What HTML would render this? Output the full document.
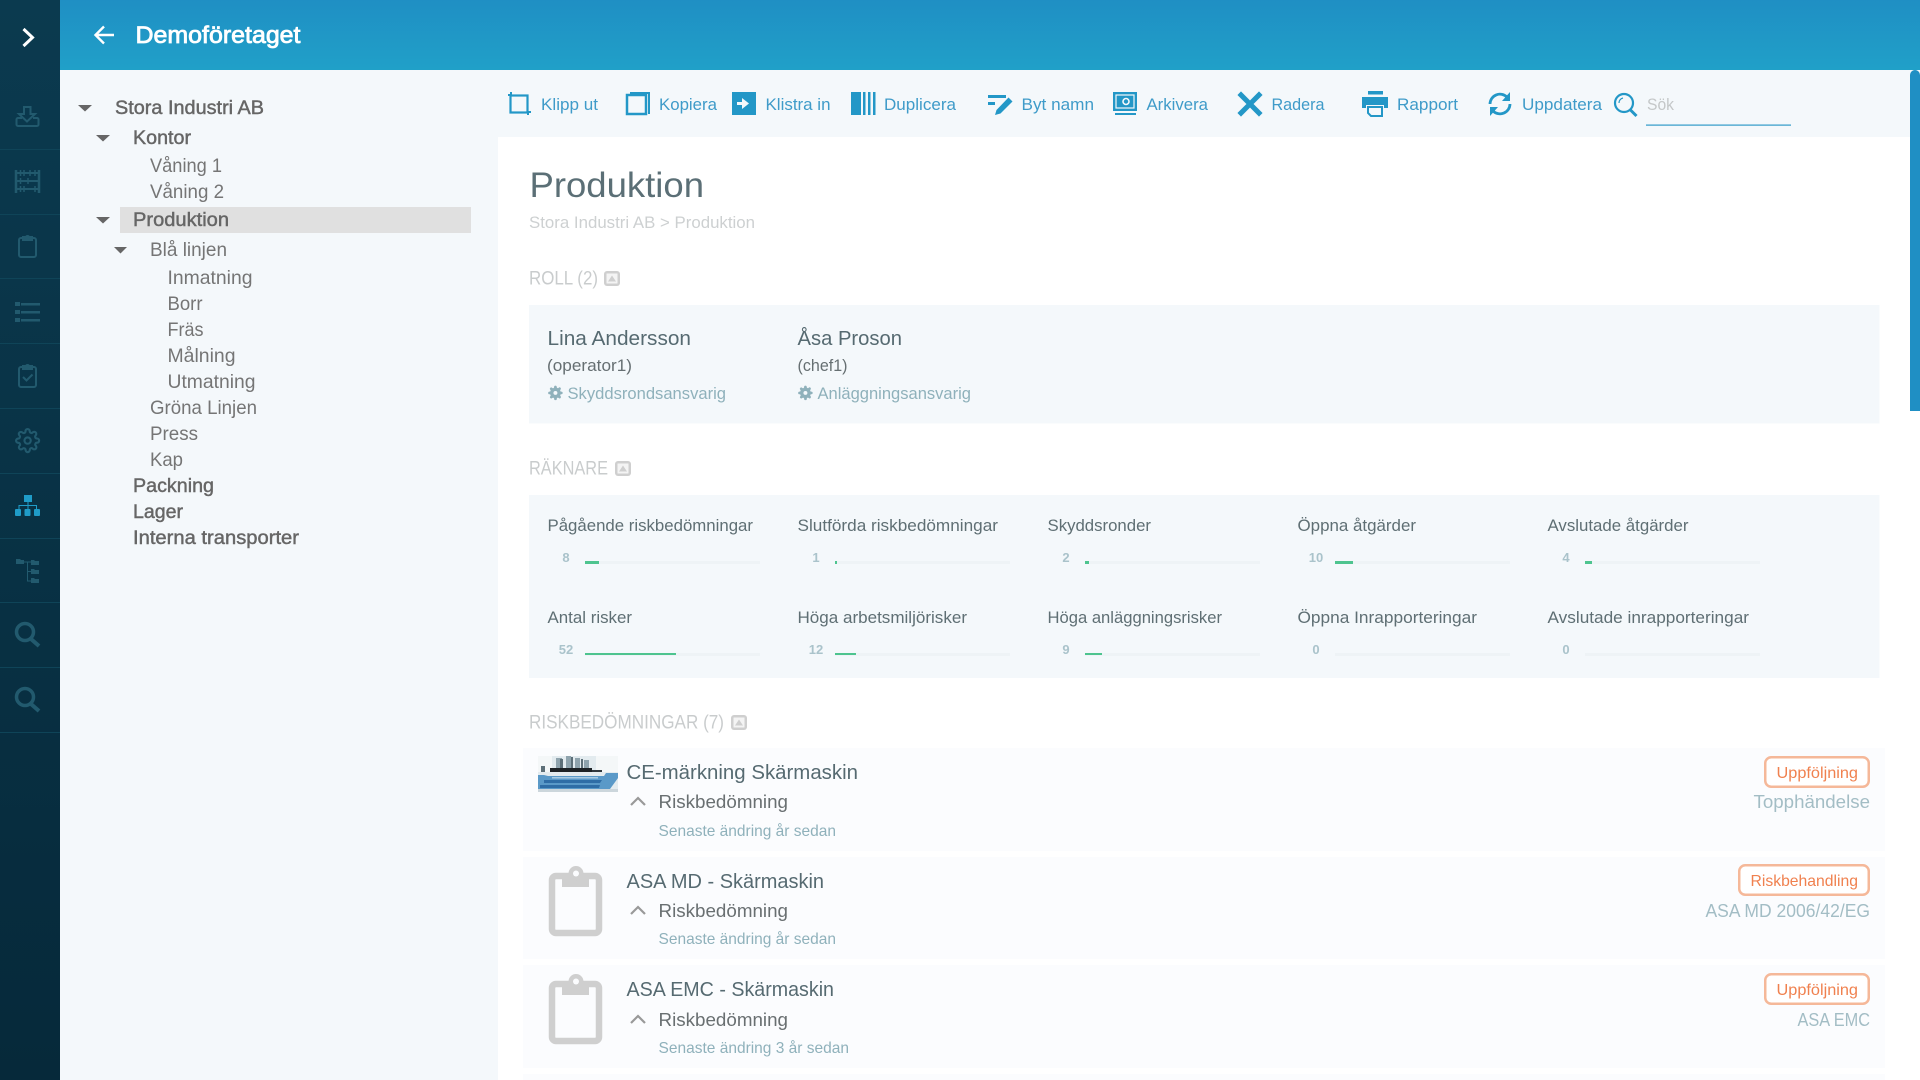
<!DOCTYPE html>
<html lang="sv"><head><meta charset="utf-8"><title>Demoföretaget</title>
<style>
html,body{margin:0;padding:0;background:#fff;width:1920px;height:1080px;overflow:hidden}
svg{display:block;position:absolute;left:0;top:0}
text{font-family:"Liberation Sans",sans-serif}
.t{font-size:19.5px;fill:#757575}
.tm{font-size:19.5px;fill:#666;stroke:#666;stroke-width:.45px}
.bar{font-size:17px;fill:#3f9bc9}
.h{font-size:19px;fill:#c9cccd}
.n{font-size:20.5px;fill:#566a71}
.l{font-size:17px;fill:#5f6f74}
.num{font-size:13px;font-weight:700;fill:#aac3cb;text-anchor:middle}
.r{font-size:18.5px;fill:#696f71}
.s{font-size:16px;fill:#8fb1bb}
.b{font-size:16px;fill:#f0814f}
.tag{font-size:18.5px;fill:#a3bdc5}
.ic{fill:none;stroke:#225a6e;stroke-width:2}
.tb{fill:#2397c7}
.tbs{fill:none;stroke:#2397c7}
</style></head><body>
<svg width="1920" height="1080" viewBox="0 0 1920 1080" xmlns="http://www.w3.org/2000/svg">
<defs>
<linearGradient id="side" x1="0" y1="0" x2="0" y2="1"><stop offset="0" stop-color="#0b3a4f"/><stop offset="1" stop-color="#06293a"/></linearGradient>
<linearGradient id="head" x1="0" y1="0" x2="0" y2="1"><stop offset="0" stop-color="#1f8fc4"/><stop offset="1" stop-color="#20a0c8"/></linearGradient>
<path id="gear" d="M12 15a3 3 0 1 0 0-6 3 3 0 0 0 0 6zM19.4 15a1.65 1.65 0 0 0 .33 1.82l.06.06a2 2 0 0 1 0 2.83 2 2 0 0 1-2.83 0l-.06-.06a1.65 1.65 0 0 0-1.82-.33 1.65 1.65 0 0 0-1 1.51V21a2 2 0 0 1-2 2 2 2 0 0 1-2-2v-.09A1.65 1.65 0 0 0 9 19.4a1.65 1.65 0 0 0-1.82.33l-.06.06a2 2 0 0 1-2.83 0 2 2 0 0 1 0-2.83l.06-.06a1.65 1.65 0 0 0 .33-1.82 1.65 1.65 0 0 0-1.51-1H3a2 2 0 0 1-2-2 2 2 0 0 1 2-2h.09A1.65 1.65 0 0 0 4.6 9a1.65 1.65 0 0 0-.33-1.82l-.06-.06a2 2 0 0 1 0-2.83 2 2 0 0 1 2.83 0l.06.06a1.65 1.65 0 0 0 1.82.33H9a1.65 1.65 0 0 0 1-1.51V3a2 2 0 0 1 2-2 2 2 0 0 1 2 2v.09a1.65 1.65 0 0 0 1 1.51 1.65 1.65 0 0 0 1.82-.33l.06-.06a2 2 0 0 1 2.83 0 2 2 0 0 1 0 2.83l-.06.06a1.65 1.65 0 0 0-.33 1.82V9a1.65 1.65 0 0 0 1.51 1H21a2 2 0 0 1 2 2 2 2 0 0 1-2 2h-.09a1.65 1.65 0 0 0-1.51 1z"/>
<g id="collapse"><rect width="16" height="15" rx="3" fill="#cfcfcf"/><rect x="2.500" y="2.500" width="11" height="10" fill="#f4f4f4"/><path d="M4 10.500l4-6 4 6z" fill="#cfcfcf"/></g>
<g id="clip"><rect x="3" y="10" width="47" height="57" rx="4" fill="none" stroke="#cfcfcf" stroke-width="6.5"/><path d="M13 7h27v14H13z" fill="#cfcfcf"/><circle cx="27" cy="7.5" r="7.5" fill="#cfcfcf"/><circle cx="27" cy="7.5" r="3" fill="#fbfcfe"/></g>
</defs>

<!-- backgrounds -->
<rect x="0" y="0" width="1920" height="1080" fill="#fff"/>
<rect x="60" y="70" width="438" height="1010" fill="#f4f8fb"/>
<rect x="498" y="70" width="1422" height="67" fill="#f4f8fb"/>
<rect x="60" y="0" width="1860" height="70" fill="url(#head)"/>
<rect x="0" y="0" width="60" height="1080" fill="url(#side)"/>

<!-- scrollbar -->
<path d="M1910 411V75a5 5 0 0 1 10 0V411z" fill="#1f8fc4"/>

<!-- sidebar separators -->
<g stroke="#0f4458" stroke-width="1">
<path d="M0 149.500H60M0 214.500H60M0 278.500H60M0 343.500H60M0 408.500H60M0 473.500H60M0 538.500H60M0 602.500H60M0 667.500H60M0 732.500H60"/>
</g>
<!-- sidebar icons -->
<path d="M23.500 29l9 8.500-9 8.500" fill="none" stroke="#fff" stroke-width="3"/>
<g class="ic">
<path d="M22 118h-4a1.500 1.500 0 0 0-1.500 1.500v5a1.500 1.500 0 0 0 1.500 1.500h19a1.500 1.500 0 0 0 1.500-1.500v-5a1.500 1.500 0 0 0-1.500-1.500h-4"/>
<path d="M24 107h6.500v7h4.500l-8 7.500-8-7.500h5z"/>
<path d="M16 170v23M39 170v23" stroke-width="2.500"/>
<path d="M16 173h23M16 181h23M16 189h23"/>
<path d="M20.500 170v6M24 170v6M30 170v6M35 170v6M20.500 178v6M28 178v6M20.500 186v6M24 186v6M35 186v6" stroke-width="1.500"/>
<rect x="19" y="238" width="17" height="19" rx="2"/>
<path d="M23 238v-1h3a1.600 1.600 0 0 1 3 0h3v3h-9z" fill="#225a6e"/>
<rect x="19" y="367" width="17" height="20" rx="2"/>
<path d="M23 367v-1h3a1.600 1.600 0 0 1 3 0h3v3h-9z" fill="#225a6e"/>
<path d="M23 377l3.500 3.500 6-6"/>
</g>
<g fill="#225a6e">
<rect x="15" y="302" width="5" height="4"/><rect x="21" y="303" width="19" height="2.500"/>
<rect x="15" y="310" width="5" height="4"/><rect x="21" y="311" width="19" height="2.500"/>
<rect x="15" y="318" width="5" height="4"/><rect x="21" y="319" width="19" height="2.500"/>
</g>
<use href="#gear" transform="translate(15 428) scale(1.05)" fill="none" stroke="#225a6e" stroke-width="2"/>
<g fill="#1f9cc8">
<rect x="24" y="495" width="8" height="7"/>
<path d="M27.500 502h1v3h8.500v4h-1v-3H28.500v3h-1v-3H19.500v3h-1v-4h9z"/>
<rect x="15" y="509" width="6" height="7" rx="1"/><rect x="24.500" y="509" width="6" height="7" rx="1"/><rect x="34" y="509" width="6" height="7" rx="1"/>
</g>
<g fill="#225a6e">
<path d="M16 559h4l1 1h3v4h-8zM31 560h3l1 1h4v4h-8zM31 569h3l1 1h4v4h-8zM31 578h3l1 1h4v4h-8z"/>
<path d="M24 561.500h7v1h-3v18h3v1h-4v-9.500h0v-9.500h-3zM27 571h4v1h-4z"/>
</g>
<g fill="none" stroke="#225a6e">
<circle cx="25" cy="632" r="8.500" stroke-width="3.500"/><path d="M31 639l8 7" stroke-width="4"/>
<circle cx="25" cy="697" r="8.500" stroke-width="3.500"/><path d="M31 704l8 7" stroke-width="4"/>
</g>

<!-- header -->
<path d="M114 35H96M104 26.500l-8.500 8.500 8.500 8.500" fill="none" stroke="#fff" stroke-width="2.400"/>
<text x="135.500" y="43" font-size="24" fill="#fff" stroke="#fff" stroke-width=".8" textLength="165" lengthAdjust="spacingAndGlyphs">Demoföretaget</text>

<!-- tree -->
<rect x="120" y="207" width="351" height="26" fill="#e0e0e0"/>
<g fill="#666">
<path d="M78 105h14l-7 6.500z"/><path d="M96 135h14l-7 6.500z"/><path d="M96 217h14l-7 6.500z"/><path d="M114 247h13l-6.500 6.500z"/>
</g>
<text class="tm" x="115" y="114" textLength="149" lengthAdjust="spacingAndGlyphs">Stora Industri AB</text>
<text class="tm" x="133" y="144" textLength="58" lengthAdjust="spacingAndGlyphs">Kontor</text>
<text class="t" x="150" y="172" textLength="72" lengthAdjust="spacingAndGlyphs">Våning 1</text>
<text class="t" x="150" y="198" textLength="74" lengthAdjust="spacingAndGlyphs">Våning 2</text>
<text class="tm" x="133" y="226" textLength="96" lengthAdjust="spacingAndGlyphs" stroke-width=".7">Produktion</text>
<text class="t" x="150" y="256" textLength="77" lengthAdjust="spacingAndGlyphs">Blå linjen</text>
<text class="t" x="167.500" y="284" textLength="85" lengthAdjust="spacingAndGlyphs">Inmatning</text>
<text class="t" x="167.500" y="310" textLength="35" lengthAdjust="spacingAndGlyphs">Borr</text>
<text class="t" x="167.500" y="336" textLength="36" lengthAdjust="spacingAndGlyphs">Fräs</text>
<text class="t" x="167.500" y="362" textLength="68" lengthAdjust="spacingAndGlyphs">Målning</text>
<text class="t" x="167.500" y="388" textLength="88" lengthAdjust="spacingAndGlyphs">Utmatning</text>
<text class="t" x="150" y="414" textLength="107" lengthAdjust="spacingAndGlyphs">Gröna Linjen</text>
<text class="t" x="150" y="440" textLength="48" lengthAdjust="spacingAndGlyphs">Press</text>
<text class="t" x="150" y="466" textLength="33" lengthAdjust="spacingAndGlyphs">Kap</text>
<text class="tm" x="133" y="492" textLength="81" lengthAdjust="spacingAndGlyphs" stroke-width=".6">Packning</text>
<text class="tm" x="133" y="518" textLength="50" lengthAdjust="spacingAndGlyphs" stroke-width=".6">Lager</text>
<text class="tm" x="133" y="544" textLength="166" lengthAdjust="spacingAndGlyphs" stroke-width=".6">Interna transporter</text>

<!-- toolbar -->
<g class="tbs" stroke-width="2.200">
<rect x="510.500" y="95.500" width="17" height="17"/>
<path d="M508 95h3M511 92v3M527 112h4M528 112v3" stroke-width="2"/>
</g>
<path d="M630 92h20v22h-2V94h-18z" class="tb"/>
<rect x="627" y="95" width="19" height="19" class="tbs" stroke-width="2.500"/>
<rect x="732" y="92" width="24" height="23" class="tb"/>
<path d="M737 102h5v-4l7 5.500-7 5.500v-4h-5z" fill="#f4f8fb"/>
<path d="M851 92h10v23h-10zM863 92h2.500v23H863zM868 92h2.500v23H868zM873 92h2.500v23H873z" class="tb"/>
<path d="M988 95h18v3h-18zM988 102h7v3h-7z" class="tb"/>
<path d="M995 115l1.500-5 12-12.500 4 4-12 12z" class="tb"/>
<path d="M1113 92h24v19h-24z" class="tb"/>
<rect x="1116" y="95" width="18" height="13" fill="none" stroke="#f4f8fb" stroke-width="1.200"/>
<circle cx="1126" cy="101.500" r="3" fill="none" stroke="#f4f8fb" stroke-width="1.600"/>
<rect x="1115" y="113" width="21" height="2" class="tb"/>
<path d="M1238 95l3-3 9 9 9-9 3 3-9 9 9 9-3 3-9-9-9 9-3-3 9-9z" class="tb" stroke="#2397c7" stroke-width=".8"/>
<rect x="1368" y="91" width="15" height="3.500" class="tb"/>
<path d="M1362 97h26v11h-4v-3h-18v3h-4z" class="tb"/>
<path d="M1368 107h14v9h-11l-3-3z" fill="none" stroke="#2397c7" stroke-width="2"/>
<path d="M1490 104a10 10 0 0 1 17-7" fill="none" stroke="#2397c7" stroke-width="2.800"/>
<path d="M1510 104a10 10 0 0 1-17 7" fill="none" stroke="#2397c7" stroke-width="2.800"/>
<path d="M1510 92v9h-8zM1490 116v-9h8z" class="tb"/>
<circle cx="1624" cy="103" r="9" fill="none" stroke="#2397c7" stroke-width="2.200"/>
<path d="M1619 103a5 5 0 0 1 4-5" fill="none" stroke="#2397c7" stroke-width="1.200"/>
<path d="M1630.500 110l6 6" fill="none" stroke="#2397c7" stroke-width="3"/>
<text class="bar" x="541" y="110" textLength="57" lengthAdjust="spacingAndGlyphs">Klipp ut</text>
<text class="bar" x="659" y="110" textLength="58" lengthAdjust="spacingAndGlyphs">Kopiera</text>
<text class="bar" x="765.500" y="110" textLength="65" lengthAdjust="spacingAndGlyphs">Klistra in</text>
<text class="bar" x="884" y="110" textLength="72" lengthAdjust="spacingAndGlyphs">Duplicera</text>
<text class="bar" x="1021.500" y="110" textLength="72.500" lengthAdjust="spacingAndGlyphs">Byt namn</text>
<text class="bar" x="1146.500" y="110" textLength="61.500" lengthAdjust="spacingAndGlyphs">Arkivera</text>
<text class="bar" x="1271.500" y="110" textLength="53" lengthAdjust="spacingAndGlyphs">Radera</text>
<text class="bar" x="1397" y="110" textLength="61" lengthAdjust="spacingAndGlyphs">Rapport</text>
<text class="bar" x="1522" y="110" textLength="80" lengthAdjust="spacingAndGlyphs">Uppdatera</text>
<text x="1647" y="110" font-size="17" fill="#c4c7c8" textLength="27" lengthAdjust="spacingAndGlyphs">Sök</text>
<rect x="1646" y="124.500" width="145" height="1.200" fill="#2f9ac8"/>

<!-- content head -->
<text x="529.500" y="197" font-size="35" fill="#5b6f76" textLength="174.500" lengthAdjust="spacingAndGlyphs">Produktion</text>
<text x="529" y="228" font-size="16.500" fill="#cdd0d1" textLength="226" lengthAdjust="spacingAndGlyphs">Stora Industri AB &gt; Produktion</text>

<!-- ROLL -->
<text class="h" x="529" y="284.500" textLength="69" lengthAdjust="spacingAndGlyphs">ROLL (2)</text>
<use href="#collapse" x="604" y="271"/>
<rect x="529" y="305" width="1350.500" height="118.500" fill="#f4f8fb"/>
<text class="n" x="547.500" y="345" textLength="143.500" lengthAdjust="spacingAndGlyphs">Lina Andersson</text>
<text class="n" x="797.500" y="345" textLength="104.500" lengthAdjust="spacingAndGlyphs">Åsa Proson</text>
<text x="547" y="371" font-size="16.500" fill="#666f72" textLength="85" lengthAdjust="spacingAndGlyphs">(operator1)</text>
<text x="797.500" y="371" font-size="16.500" fill="#666f72" textLength="50" lengthAdjust="spacingAndGlyphs">(chef1)</text>
<use href="#gear" transform="translate(547.500 385) scale(.66)" fill="#8fb1bb" fill-rule="evenodd"/>
<use href="#gear" transform="translate(797.500 385) scale(.66)" fill="#8fb1bb" fill-rule="evenodd"/>
<text x="567.500" y="399" font-size="17" fill="#8fb1bb" textLength="158.500" lengthAdjust="spacingAndGlyphs">Skyddsrondsansvarig</text>
<text x="817.500" y="399" font-size="17" fill="#8fb1bb" textLength="153.500" lengthAdjust="spacingAndGlyphs">Anläggningsansvarig</text>

<!-- RÄKNARE -->
<text class="h" x="529" y="474.500" textLength="79" lengthAdjust="spacingAndGlyphs">RÄKNARE</text>
<use href="#collapse" x="615" y="461"/>
<rect x="529" y="495" width="1350.500" height="183" fill="#f4f8fb"/>
<text class="l" x="547.500" y="531" textLength="205.500" lengthAdjust="spacingAndGlyphs">Pågående riskbedömningar</text>
<text class="l" x="797.500" y="531" textLength="200.500" lengthAdjust="spacingAndGlyphs">Slutförda riskbedömningar</text>
<text class="l" x="1047.500" y="531" textLength="103.500" lengthAdjust="spacingAndGlyphs">Skyddsronder</text>
<text class="l" x="1297.500" y="531" textLength="118.500" lengthAdjust="spacingAndGlyphs">Öppna åtgärder</text>
<text class="l" x="1547.500" y="531" textLength="141" lengthAdjust="spacingAndGlyphs">Avslutade åtgärder</text>
<text class="l" x="547.500" y="623" textLength="84.500" lengthAdjust="spacingAndGlyphs">Antal risker</text>
<text class="l" x="797.500" y="623" textLength="169.500" lengthAdjust="spacingAndGlyphs">Höga arbetsmiljörisker</text>
<text class="l" x="1047.500" y="623" textLength="174.500" lengthAdjust="spacingAndGlyphs">Höga anläggningsrisker</text>
<text class="l" x="1297.500" y="623" textLength="179.500" lengthAdjust="spacingAndGlyphs">Öppna Inrapporteringar</text>
<text class="l" x="1547.500" y="623" textLength="201.500" lengthAdjust="spacingAndGlyphs">Avslutade inrapporteringar</text>
<text class="num" x="566" y="562">8</text><text class="num" x="816" y="562">1</text><text class="num" x="1066" y="562">2</text><text class="num" x="1316" y="562">10</text><text class="num" x="1566" y="562">4</text>
<text class="num" x="566" y="654">52</text><text class="num" x="816" y="654">12</text><text class="num" x="1066" y="654">9</text><text class="num" x="1316" y="654">0</text><text class="num" x="1566" y="654">0</text>
<g fill="#eef3f6">
<rect x="585" y="561" width="175" height="3"/><rect x="835" y="561" width="175" height="3"/><rect x="1085" y="561" width="175" height="3"/><rect x="1335" y="561" width="175" height="3"/><rect x="1585" y="561" width="175" height="3"/>
<rect x="585" y="653" width="175" height="3"/><rect x="835" y="653" width="175" height="3"/><rect x="1085" y="653" width="175" height="3"/><rect x="1335" y="653" width="175" height="3"/><rect x="1585" y="653" width="175" height="3"/>
</g>
<g fill="#4ec48f">
<rect x="585" y="561" width="14" height="3"/><rect x="835" y="561" width="2" height="3"/><rect x="1085" y="561" width="4" height="3"/><rect x="1335" y="561" width="18" height="3"/><rect x="1585" y="561" width="7" height="3"/>
<rect x="585" y="653" width="91" height="2"/><rect x="835" y="653" width="21" height="2"/><rect x="1085" y="653" width="17" height="2"/>
</g>

<!-- RISKBEDÖMNINGAR -->
<text class="h" x="529" y="728.500" textLength="195" lengthAdjust="spacingAndGlyphs">RISKBEDÖMNINGAR (7)</text>
<use href="#collapse" x="731" y="715"/>
<rect x="523" y="748" width="1362" height="103" fill="#fbfcfe"/>
<rect x="523" y="857" width="1362" height="102" fill="#fbfcfe"/>
<rect x="523" y="965" width="1362" height="103" fill="#fbfcfe"/>
<rect x="523" y="1074" width="1362" height="6" fill="#fbfcfe"/>

<!-- thumbnail -->
<rect x="538" y="756" width="80" height="36" fill="#e3ebef"/>
<path d="M538 756h14v16h-14zM596 756h22v16h-22z" fill="#f4f7f8"/>
<path d="M556 758h6v11h-6zM566 756h5v13h-5zM575 758h5v11h-5zM584 760h5v9h-5z" fill="#8fa3ad"/>
<path d="M541 766h4v6h-4zM560 759h3v9h-3zM571 757h2v11h-2zM581 759h2v9h-2z" fill="#5d6f78"/>
<rect x="550" y="768" width="42" height="4" fill="#1d2226"/>
<rect x="592" y="770" width="10" height="2" fill="#30383d"/>
<path d="M538 775h6l4 1h56l2-3h12v5l-8 11h-72z" fill="#5a99c8"/>
<path d="M544 780h58l-2 3h-56zM540 785h60l-1 3h-59z" fill="#2f6da6"/>
<path d="M552 777h46v1.500h-46z" fill="#a9cce3"/>
<rect x="538" y="789" width="80" height="3" fill="#ccd6dc"/>

<use href="#clip" x="549" y="866"/>
<use href="#clip" x="549" y="974"/>

<text class="n" x="626.500" y="779" textLength="231.500" lengthAdjust="spacingAndGlyphs">CE-märkning Skärmaskin</text>
<text class="n" x="626.500" y="888" textLength="197.500" lengthAdjust="spacingAndGlyphs">ASA MD - Skärmaskin</text>
<text class="n" x="626.500" y="996" textLength="207.500" lengthAdjust="spacingAndGlyphs">ASA EMC - Skärmaskin</text>
<g fill="none" stroke="#999" stroke-width="2.200">
<path d="M631 805l7-7 7 7"/><path d="M631 914l7-7 7 7"/><path d="M631 1023l7-7 7 7"/>
</g>
<text class="r" x="658.500" y="808" textLength="129.500" lengthAdjust="spacingAndGlyphs">Riskbedömning</text>
<text class="r" x="658.500" y="917" textLength="129.500" lengthAdjust="spacingAndGlyphs">Riskbedömning</text>
<text class="r" x="658.500" y="1026" textLength="129.500" lengthAdjust="spacingAndGlyphs">Riskbedömning</text>
<text class="s" x="658.500" y="836" textLength="177.500" lengthAdjust="spacingAndGlyphs">Senaste ändring år sedan</text>
<text class="s" x="658.500" y="944" textLength="177.500" lengthAdjust="spacingAndGlyphs">Senaste ändring år sedan</text>
<text class="s" x="658.500" y="1053" textLength="190.500" lengthAdjust="spacingAndGlyphs">Senaste ändring 3 år sedan</text>

<g fill="#fff" stroke="#f5b899" stroke-width="2.500">
<rect x="1765.250" y="757.250" width="103.500" height="29.500" rx="6"/>
<rect x="1739.250" y="865.250" width="129.500" height="29.500" rx="6"/>
<rect x="1765.250" y="974.250" width="103.500" height="29.500" rx="6"/>
</g>
<text class="b" x="1776.500" y="778" textLength="81.500" lengthAdjust="spacingAndGlyphs">Uppföljning</text>
<text class="b" x="1750.500" y="886" textLength="107.500" lengthAdjust="spacingAndGlyphs">Riskbehandling</text>
<text class="b" x="1776.500" y="995" textLength="81.500" lengthAdjust="spacingAndGlyphs">Uppföljning</text>
<text class="tag" x="1753.500" y="808" textLength="116.500" lengthAdjust="spacingAndGlyphs">Topphändelse</text>
<text class="tag" x="1705.500" y="917" textLength="164.500" lengthAdjust="spacingAndGlyphs">ASA MD 2006/42/EG</text>
<text class="tag" x="1797.500" y="1026" textLength="72.500" lengthAdjust="spacingAndGlyphs">ASA EMC</text>
</svg>
</body></html>
